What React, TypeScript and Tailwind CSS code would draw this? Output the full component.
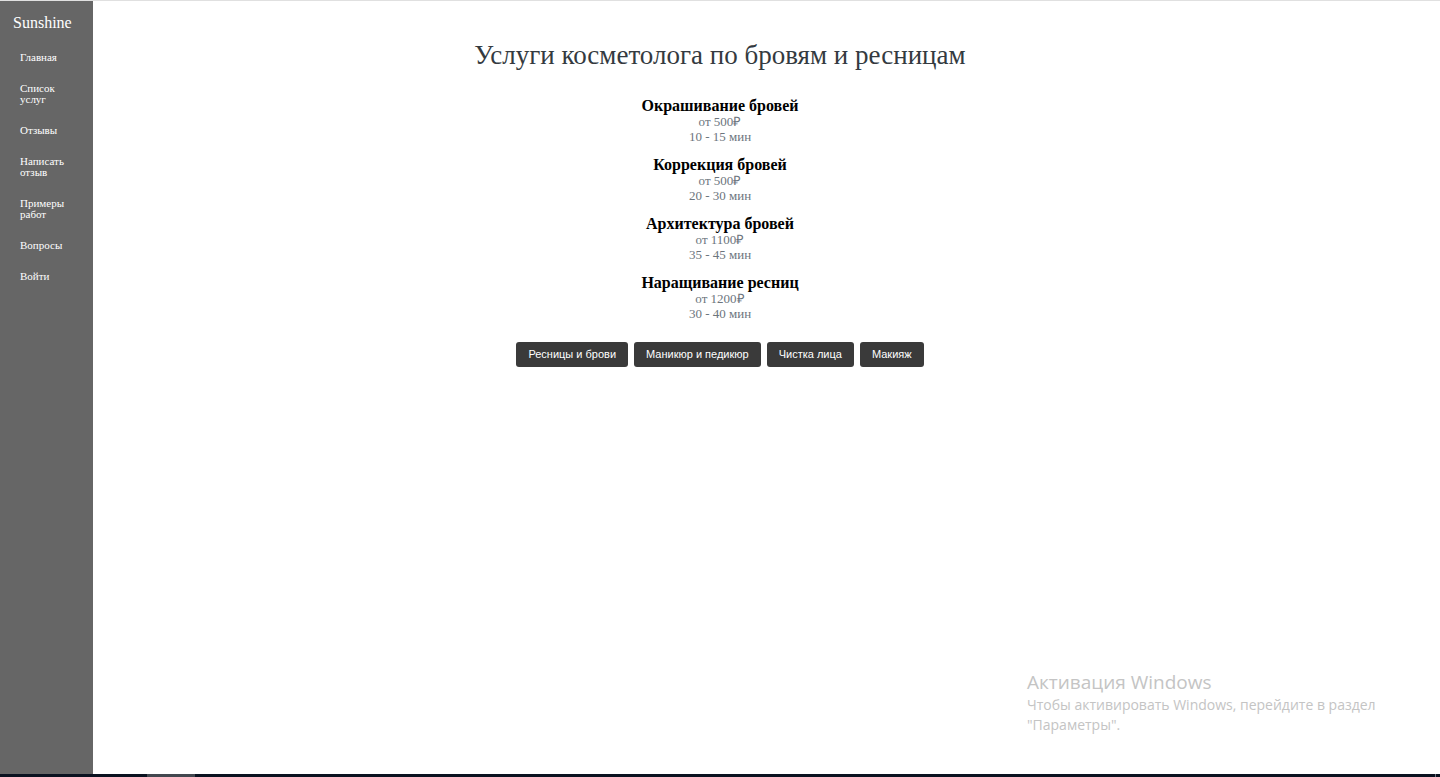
const navItems: string[] = [
  'Главная',
  'Список услуг',
  'Отзывы',
  'Написать отзыв',
  'Примеры работ',
  'Вопросы',
  'Войти',
];

const services = [
  { title: 'Окрашивание бровей', price: 'от 500₽', time: '10 - 15 мин' },
  { title: 'Коррекция бровей', price: 'от 500₽', time: '20 - 30 мин' },
  { title: 'Архитектура бровей', price: 'от 1100₽', time: '35 - 45 мин' },
  { title: 'Наращивание ресниц', price: 'от 1200₽', time: '30 - 40 мин' },
];

const categories: string[] = ['Ресницы и брови', 'Маникюр и педикюр', 'Чистка лица', 'Макияж'];

function Sidebar() {
  return (
    <aside className="w-[93px] shrink-0 bg-[#666666] pt-3 text-white">
      <a href="#" className="block pl-[13px] text-base leading-5">
        Sunshine
      </a>
      <nav className="mt-[19px] flex flex-col gap-5 px-5 text-[11px] leading-[11px]">
        {navItems.map((item) => (
          <a key={item} href="#" className="block">
            {item}
          </a>
        ))}
      </nav>
    </aside>
  );
}

function ActivationNotice() {
  return (
    <div className="absolute right-0 bottom-[42px] w-[413px] pr-10 font-['Open_Sans','Noto_Sans',sans-serif] text-[#c4c4c4]">
      <p className="text-[19px] leading-[26px]">Активация Windows</p>
      <p className="text-sm leading-5">
        Чтобы активировать Windows, перейдите в раздел "Параметры".
      </p>
    </div>
  );
}

export default function App() {
  return (
    <div className="relative flex min-h-screen flex-col border-t border-[#e0e0e0] bg-white font-['Liberation_Serif','Times_New_Roman',serif]">
      <div className="flex flex-1">
        <Sidebar />
        <main className="flex flex-1 flex-col items-center pt-[38px] pr-[93px] text-center">
          <h1 className="text-[27px] leading-8 text-[#343a40]">
            Услуги косметолога по бровям и ресницам
          </h1>
          <ul className="mt-[26px] flex flex-col gap-3">
            {services.map((service) => (
              <li key={service.title}>
                <h2 className="text-base leading-[17px] font-bold text-black">{service.title}</h2>
                <p className="text-[13px] leading-[15px] text-[#6c757d]">{service.price}</p>
                <p className="text-[13px] leading-[15px] text-[#6c757d]">{service.time}</p>
              </li>
            ))}
          </ul>
          <div className="mt-[21px] flex gap-1.5">
            {categories.map((category) => (
              <button
                key={category}
                type="button"
                className="h-[25px] rounded-[3px] bg-[#3a3a3a] px-3 font-['Liberation_Sans',Arial,sans-serif] text-[11px] text-white"
              >
                {category}
              </button>
            ))}
          </div>
        </main>
      </div>
      <footer className="flex h-[3px] justify-between bg-[#0a1220] pr-1 pl-[147px]">
        <div className="w-12 bg-[#42474f]" />
        <div className="w-px bg-[#6b7280]" />
      </footer>
      <ActivationNotice />
    </div>
  );
}
